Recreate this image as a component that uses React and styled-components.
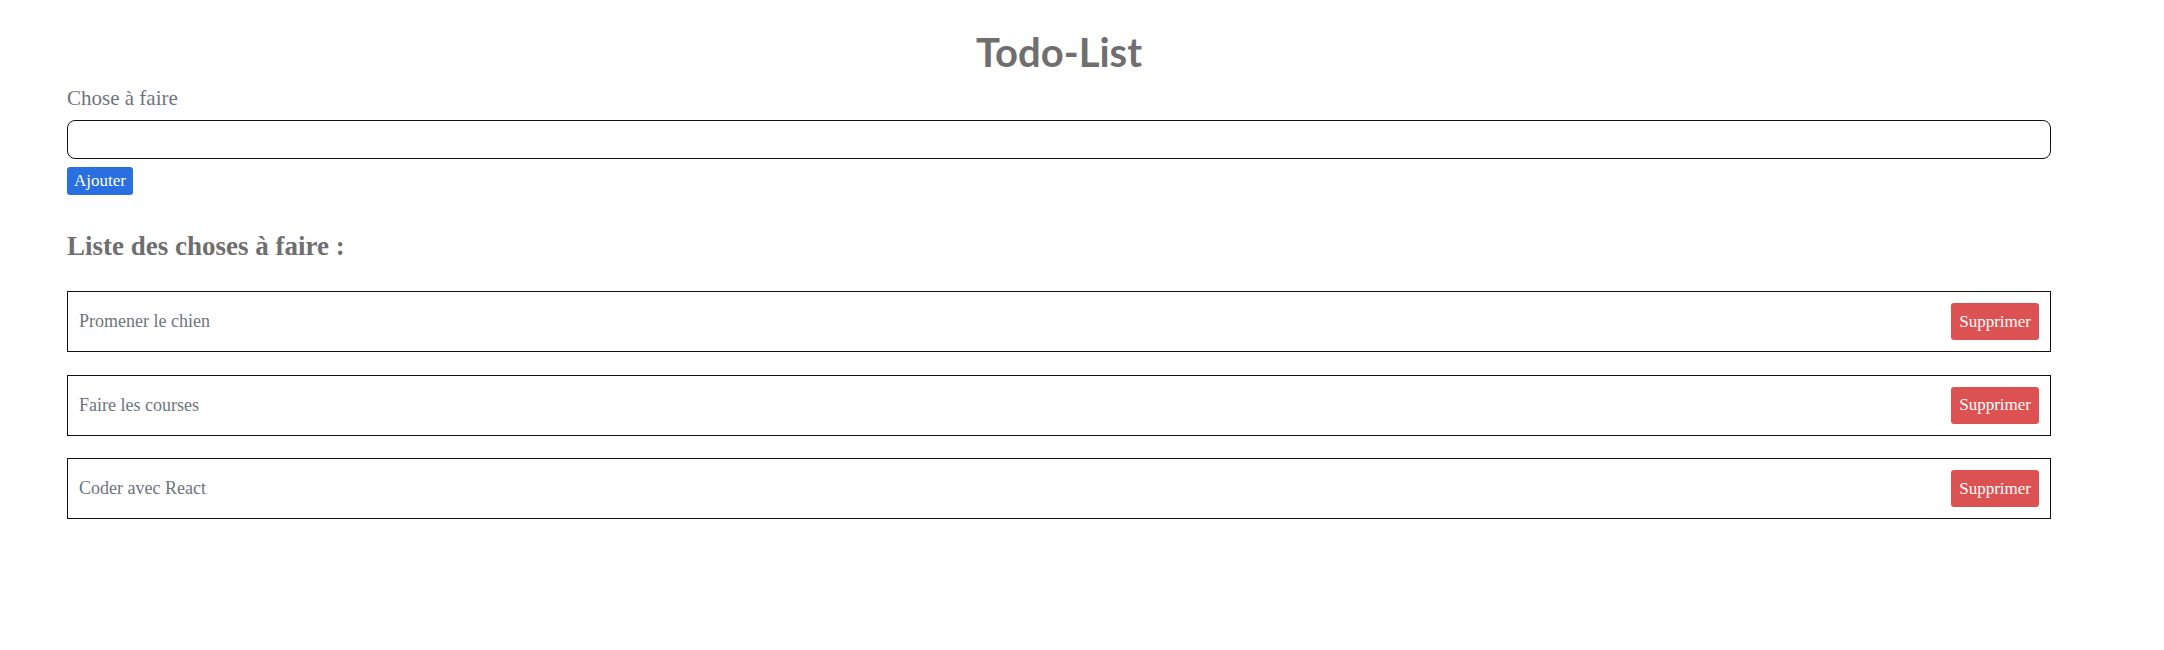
import React from "react";
import styled, { createGlobalStyle } from "styled-components";

const Global = createGlobalStyle`
  html, body { margin: 0; padding: 0; background: #fff; }
  body { font-family: "Liberation Serif", "DejaVu Serif", serif; color: #6c757d; }
  * { box-sizing: border-box; }
`;

const Page = styled.main`
  width: 1984px;
  margin-left: 67px;
  padding-top: 28px;
`;

const Title = styled.h1`
  margin: 0;
  font-family: Lato, "Noto Sans", sans-serif;
  font-weight: 700;
  font-size: 40px;
  line-height: 48px;
  text-align: center;
  color: #6f6f6f;
`;

const Form = styled.form`
  display: flex;
  flex-direction: column;
  align-items: flex-start;
  margin-top: 10px;
`;

const Label = styled.label`
  font-size: 21px;
  line-height: 24px;
  color: #6c757d;
`;

const Input = styled.input`
  width: 100%;
  height: 39px;
  margin-top: 10px;
  border: 1px solid #111;
  border-radius: 8px;
  background: #fff;
  font: inherit;
  padding: 0 10px;
`;

const Button = styled.button`
  border: none;
  border-radius: 3px;
  color: #fff;
  font-family: "Liberation Serif", "DejaVu Serif", serif;
  font-size: 17px;
  cursor: pointer;
  background: ${(p) => (p.$variant === "danger" ? "#dc5151" : "#2a6fdf")};
  height: ${(p) => (p.$variant === "danger" ? "37px" : "28px")};
  padding: ${(p) => (p.$variant === "danger" ? "0 8px" : "0 7px")};
`;

const AddButton = styled(Button)`
  margin-top: 8px;
`;

const ListTitle = styled.h3`
  margin: 35px 0 0;
  font-size: 27px;
  line-height: 32px;
  font-weight: 700;
  color: #6f6f6f;
`;

const List = styled.ul`
  list-style: none;
  margin: 29px 0 0;
  padding: 0;
  display: flex;
  flex-direction: column;
  gap: 22.5px;
`;

const Item = styled.li`
  display: flex;
  align-items: center;
  justify-content: space-between;
  border: 1px solid #111;
  padding: 11px;
  font-size: 18px;
  color: #6c757d;
`;

const todos = ["Promener le chien", "Faire les courses", "Coder avec React"];

export default function App() {
  return (
    <>
      <Global />
      <Page>
        <Title>Todo-List</Title>
        <Form onSubmit={(e) => e.preventDefault()}>
          <Label htmlFor="todo">Chose à faire</Label>
          <Input id="todo" type="text" />
          <AddButton type="submit">Ajouter</AddButton>
        </Form>
        <ListTitle>Liste des choses à faire :</ListTitle>
        <List>
          {todos.map((t) => (
            <Item key={t}>
              <span>{t}</span>
              <Button $variant="danger">Supprimer</Button>
            </Item>
          ))}
        </List>
      </Page>
    </>
  );
}
